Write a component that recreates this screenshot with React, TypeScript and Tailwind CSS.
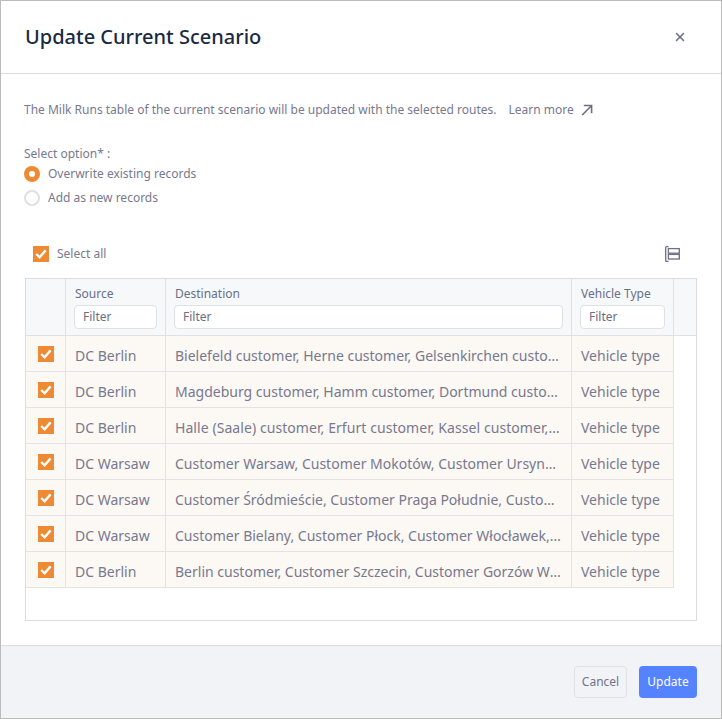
import React from 'react';
import { X } from 'lucide-react';

const rows = [
  { source: 'DC Berlin', destination: 'Bielefeld customer, Herne customer, Gelsenkirchen customer, Bochum customer', spacing: '' },
  { source: 'DC Berlin', destination: 'Magdeburg customer, Hamm customer, Dortmund customer, Essen customer', spacing: '' },
  { source: 'DC Berlin', destination: 'Halle (Saale) customer, Erfurt customer, Kassel customer, Paderborn customer', spacing: 'tracking-[0.005em]' },
  { source: 'DC Warsaw', destination: 'Customer Warsaw, Customer Mokotów, Customer Ursynów, Customer Wola', spacing: '' },
  { source: 'DC Warsaw', destination: 'Customer Śródmieście, Customer Praga Południe, Customer Żoliborz, Customer Wola', spacing: '' },
  { source: 'DC Warsaw', destination: 'Customer Bielany, Customer Płock, Customer Włocławek, Customer Toruń', spacing: '' },
  { source: 'DC Berlin', destination: 'Berlin customer, Customer Szczecin, Customer Gorzów Wielkopolski, Customer Poznań', spacing: '' },
];

const Check: React.FC = () => (
  <div className="flex h-4 w-4 items-center justify-center bg-[#ee8a33]">
    <svg viewBox="0 0 16 16" className="h-4 w-4" fill="none">
      <path d="M3.2 8 L6.6 11.3 L12.6 4.4" stroke="#fff" strokeWidth="2.4" />
    </svg>
  </div>
);

const FilterInput: React.FC = () => (
  <input
    readOnly
    placeholder="Filter"
    className="h-6 w-full rounded-[4px] border border-[#dfe1e8] bg-white px-2 pb-[2px] text-[12px] text-[#6b6e85] placeholder:text-[#6b6e85] outline-none"
  />
);

export default function App() {
  return (
    <div className="flex h-[719px] w-[722px] flex-col border border-[#bbbbbb] bg-white font-['Noto_Sans',sans-serif] text-[#777990]">
      <header className="flex h-[73px] shrink-0 items-center justify-between border-b border-[#dcdcdc] pl-6 pr-[34px]">
        <h1 className="text-[20px] font-medium text-[#1b2a42]">Update Current Scenario</h1>
        <X size={14} strokeWidth={2.6} className="text-[#6d6f85]" />
      </header>

      <main className="flex min-h-0 flex-1 flex-col px-6">
        <div className="mt-[27px] flex h-[18px] items-center text-[12px] leading-[18px]">
          <p className="-ml-px">The Milk Runs table of the current scenario will be updated with the selected routes.</p>
          <span className="ml-3">Learn more</span>
          <svg viewBox="0 0 12 12" className="ml-[7px] h-3 w-3 text-[#6d6f85]" fill="none" stroke="currentColor" strokeWidth="1.6">
            <path d="M1.2 11 L10.2 2 M2.8 1.5 H10.6 V9.2" />
          </svg>
        </div>

        <div className="-ml-px mt-[26px] text-[12px] leading-[18px]">Select option* :</div>
        <div className="-ml-px -mt-px flex h-6 items-center gap-2 text-[12px]">
          <span className="flex h-4 w-4 items-center justify-center rounded-full bg-[#ee8a33]">
            <span className="h-[6px] w-[6px] rounded-full bg-white" />
          </span>
          Overwrite existing records
        </div>
        <div className="-ml-px flex h-6 items-center gap-2 text-[12px]">
          <span className="h-4 w-4 rounded-full border-2 border-[#dfdfdf] bg-white" />
          Add as new records
        </div>

        <div className="mt-8 flex h-[24px] items-center justify-between pl-2 pr-[17px] text-[12px]">
          <div className="flex items-center gap-2">
            <Check />
            Select all
          </div>
          <svg viewBox="0 0 15 16" className="h-4 w-[15px] text-[#6d6f85]" fill="none" stroke="currentColor" strokeWidth="1.3">
            <path d="M3.6 0.7 H1.6 Q0.7 0.7 0.7 1.6 V14.4 Q0.7 15.3 1.6 15.3 H3.6" />
            <rect x="3.4" y="2.6" width="10.9" height="4.6" />
            <rect x="3.4" y="8.4" width="10.9" height="4.6" />
          </svg>
        </div>

        <div className="mt-[12px] h-[343px] w-[672px] border border-[#dcdcdc]">
          <div className="flex h-[57px] border-b border-[#dfe1e6] bg-[#f7f8fa] text-[12px]">
            <div className="w-10 shrink-0 border-r border-[#dfe1e6]" />
            <div className="w-[100px] shrink-0 border-r border-[#dfe1e6] px-2">
              <div className="ml-px mt-[6px] h-[20px] leading-[17px] text-[#66708a]">Source</div>
              <FilterInput />
            </div>
            <div className="w-[406px] shrink-0 border-r border-[#dfe1e6] px-2">
              <div className="ml-px mt-[6px] h-[20px] leading-[17px] text-[#66708a]">Destination</div>
              <FilterInput />
            </div>
            <div className="w-[102px] shrink-0 border-r border-[#dfe1e6] px-2">
              <div className="ml-px mt-[6px] h-[20px] leading-[17px] text-[#66708a]">Vehicle Type</div>
              <FilterInput />
            </div>
          </div>
          {rows.map((row, i) => (
            <div key={i} className="flex h-9 w-[648px] border-b border-[#e3e3e3] bg-[#fcf8f3] text-[14px]">
              <div className="flex w-10 shrink-0 items-center justify-center border-r border-[#e3e3e3]">
                <Check />
              </div>
              <div className="flex w-[100px] shrink-0 items-center border-r border-[#e3e3e3] pl-[9px] pt-1">{row.source}</div>
              <div className="flex w-[406px] shrink-0 items-center border-r border-[#e3e3e3] pl-[9px] pr-[9px] pt-1">
                <span className={`truncate ${row.spacing}`}>{row.destination}</span>
              </div>
              <div className="flex w-[102px] shrink-0 items-center border-r border-[#e3e3e3] pl-[9px] pt-1">Vehicle type</div>
            </div>
          ))}
        </div>
      </main>

      <footer className="flex h-[73px] shrink-0 items-center justify-end gap-3 border-t border-[#dcdcdc] bg-[#f2f3f7] pr-6 text-[12px]">
        <button className="h-8 w-[53px] rounded-[4px] border border-[#dfe1e6] bg-[#f2f3f7] text-[#71738a]">Cancel</button>
        <button className="h-8 w-[58px] rounded-[4px] bg-[#5583ff] text-white">Update</button>
      </footer>
    </div>
  );
}
